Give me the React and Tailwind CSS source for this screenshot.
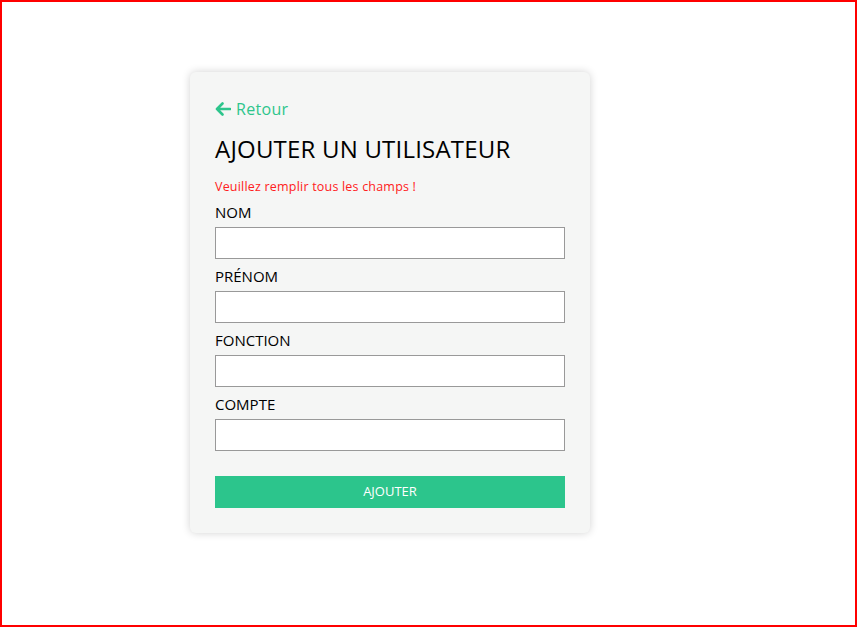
import React from "react";

function Field({ label }) {
  return (
    <div className="flex flex-col">
      <label className="text-[15px] leading-[22px] text-black mb-[4px]">{label}</label>
      <input type="text" className="h-[32px] w-full bg-white border border-[#999999] outline-none" />
    </div>
  );
}

export default function App() {
  return (
    <div className="h-screen w-full box-border border-2 border-[#ff0000] bg-white font-['Open_Sans',sans-serif]">
      <div className="ml-[188px] mt-[70px] w-[400px] rounded-md bg-[#f5f6f5] shadow-[0_0_8px_rgba(0,0,0,0.18)] px-[25px] pt-[27px] pb-[25px]">
        <a className="flex items-center gap-[5px] text-[#2dc58c] text-[16px] leading-[20px] tracking-[0.3px]">
          <svg width="16" height="14" viewBox="0 0 16 14" fill="none">
            <path d="M15 7H2M7.5 1.5L2 7l5.5 5.5" stroke="#2dc58c" strokeWidth="2.6" strokeLinecap="round" strokeLinejoin="round" />
          </svg>
          <span>Retour</span>
        </a>
        <h1 className="mt-[15px] text-[24px] leading-[30px] font-medium tracking-[0.2px] text-black">AJOUTER UN UTILISATEUR</h1>
        <p className="mt-[15px] text-[12.5px] leading-[16px] tracking-[0.2px] text-[#ff2020]">Veuillez remplir tous les champs !</p>
        <div className="mt-[6px] flex flex-col gap-[6px]">
          <Field label="NOM" />
          <Field label="PRÉNOM" />
          <Field label="FONCTION" />
          <Field label="COMPTE" />
        </div>
        <button className="mt-[25px] h-[32px] w-full bg-[#2cc58c] text-white text-[13px] font-medium">AJOUTER</button>
      </div>
    </div>
  );
}
